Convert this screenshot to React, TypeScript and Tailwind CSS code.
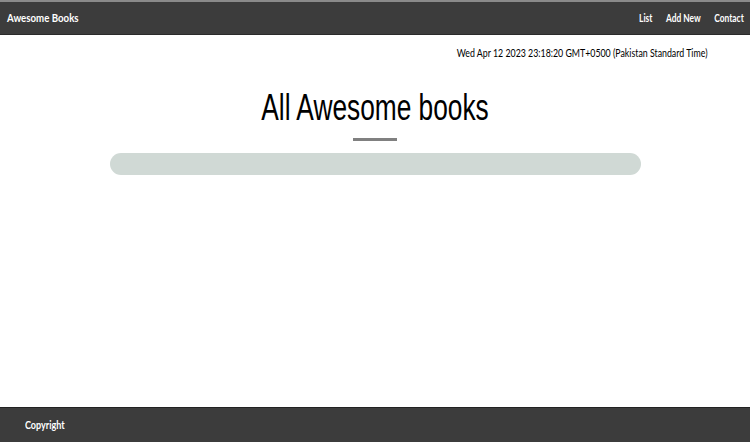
export default function App() {
  return (
    <div className="min-h-screen flex flex-col bg-white font-['Lato','Noto_Sans',sans-serif] text-black">
      <header className="h-[35px] flex items-center justify-between bg-[#3c3c3c] border-t-2 border-[#8a8a8a] border-b border-b-[#2a2a2a] pl-[7px] pr-[6px]">
        <h1 className="text-[11px] font-bold text-white origin-left scale-x-[0.88]">Awesome Books</h1>
        <nav>
          <ul className="flex gap-[18px] text-[11px] font-bold text-white origin-right scale-x-[0.76]">
            <li>List</li>
            <li>Add New</li>
            <li>Contact</li>
          </ul>
        </nav>
      </header>

      <main className="flex flex-col">
        <p className="self-end pr-[43px] pt-[10px] text-[11px] text-black">
          <span className="inline-block origin-right scale-x-[0.8]">
            Wed Apr 12 2023 23:18:20 GMT+0500 (Pakistan Standard Time)
          </span>
        </p>
        <h2 className="mt-[26px] text-center font-['Liberation_Sans',Arial,sans-serif] text-[36px] leading-[40px] scale-x-[0.73]">
          All Awesome books
        </h2>
        <div className="mx-auto mt-[10px] h-[3px] w-[44px] bg-[#808080]" />
        <div className="mx-auto mt-[12px] h-[22px] w-[531px] rounded-full bg-[#d0d9d5]" />
      </main>

      <footer className="mt-auto h-[35px] flex items-center bg-[#3c3c3c] border-t border-[#222] pl-[25px]">
        <p className="text-[11px] font-bold text-white origin-left scale-x-[0.82]">Copyright</p>
      </footer>
    </div>
  )
}
